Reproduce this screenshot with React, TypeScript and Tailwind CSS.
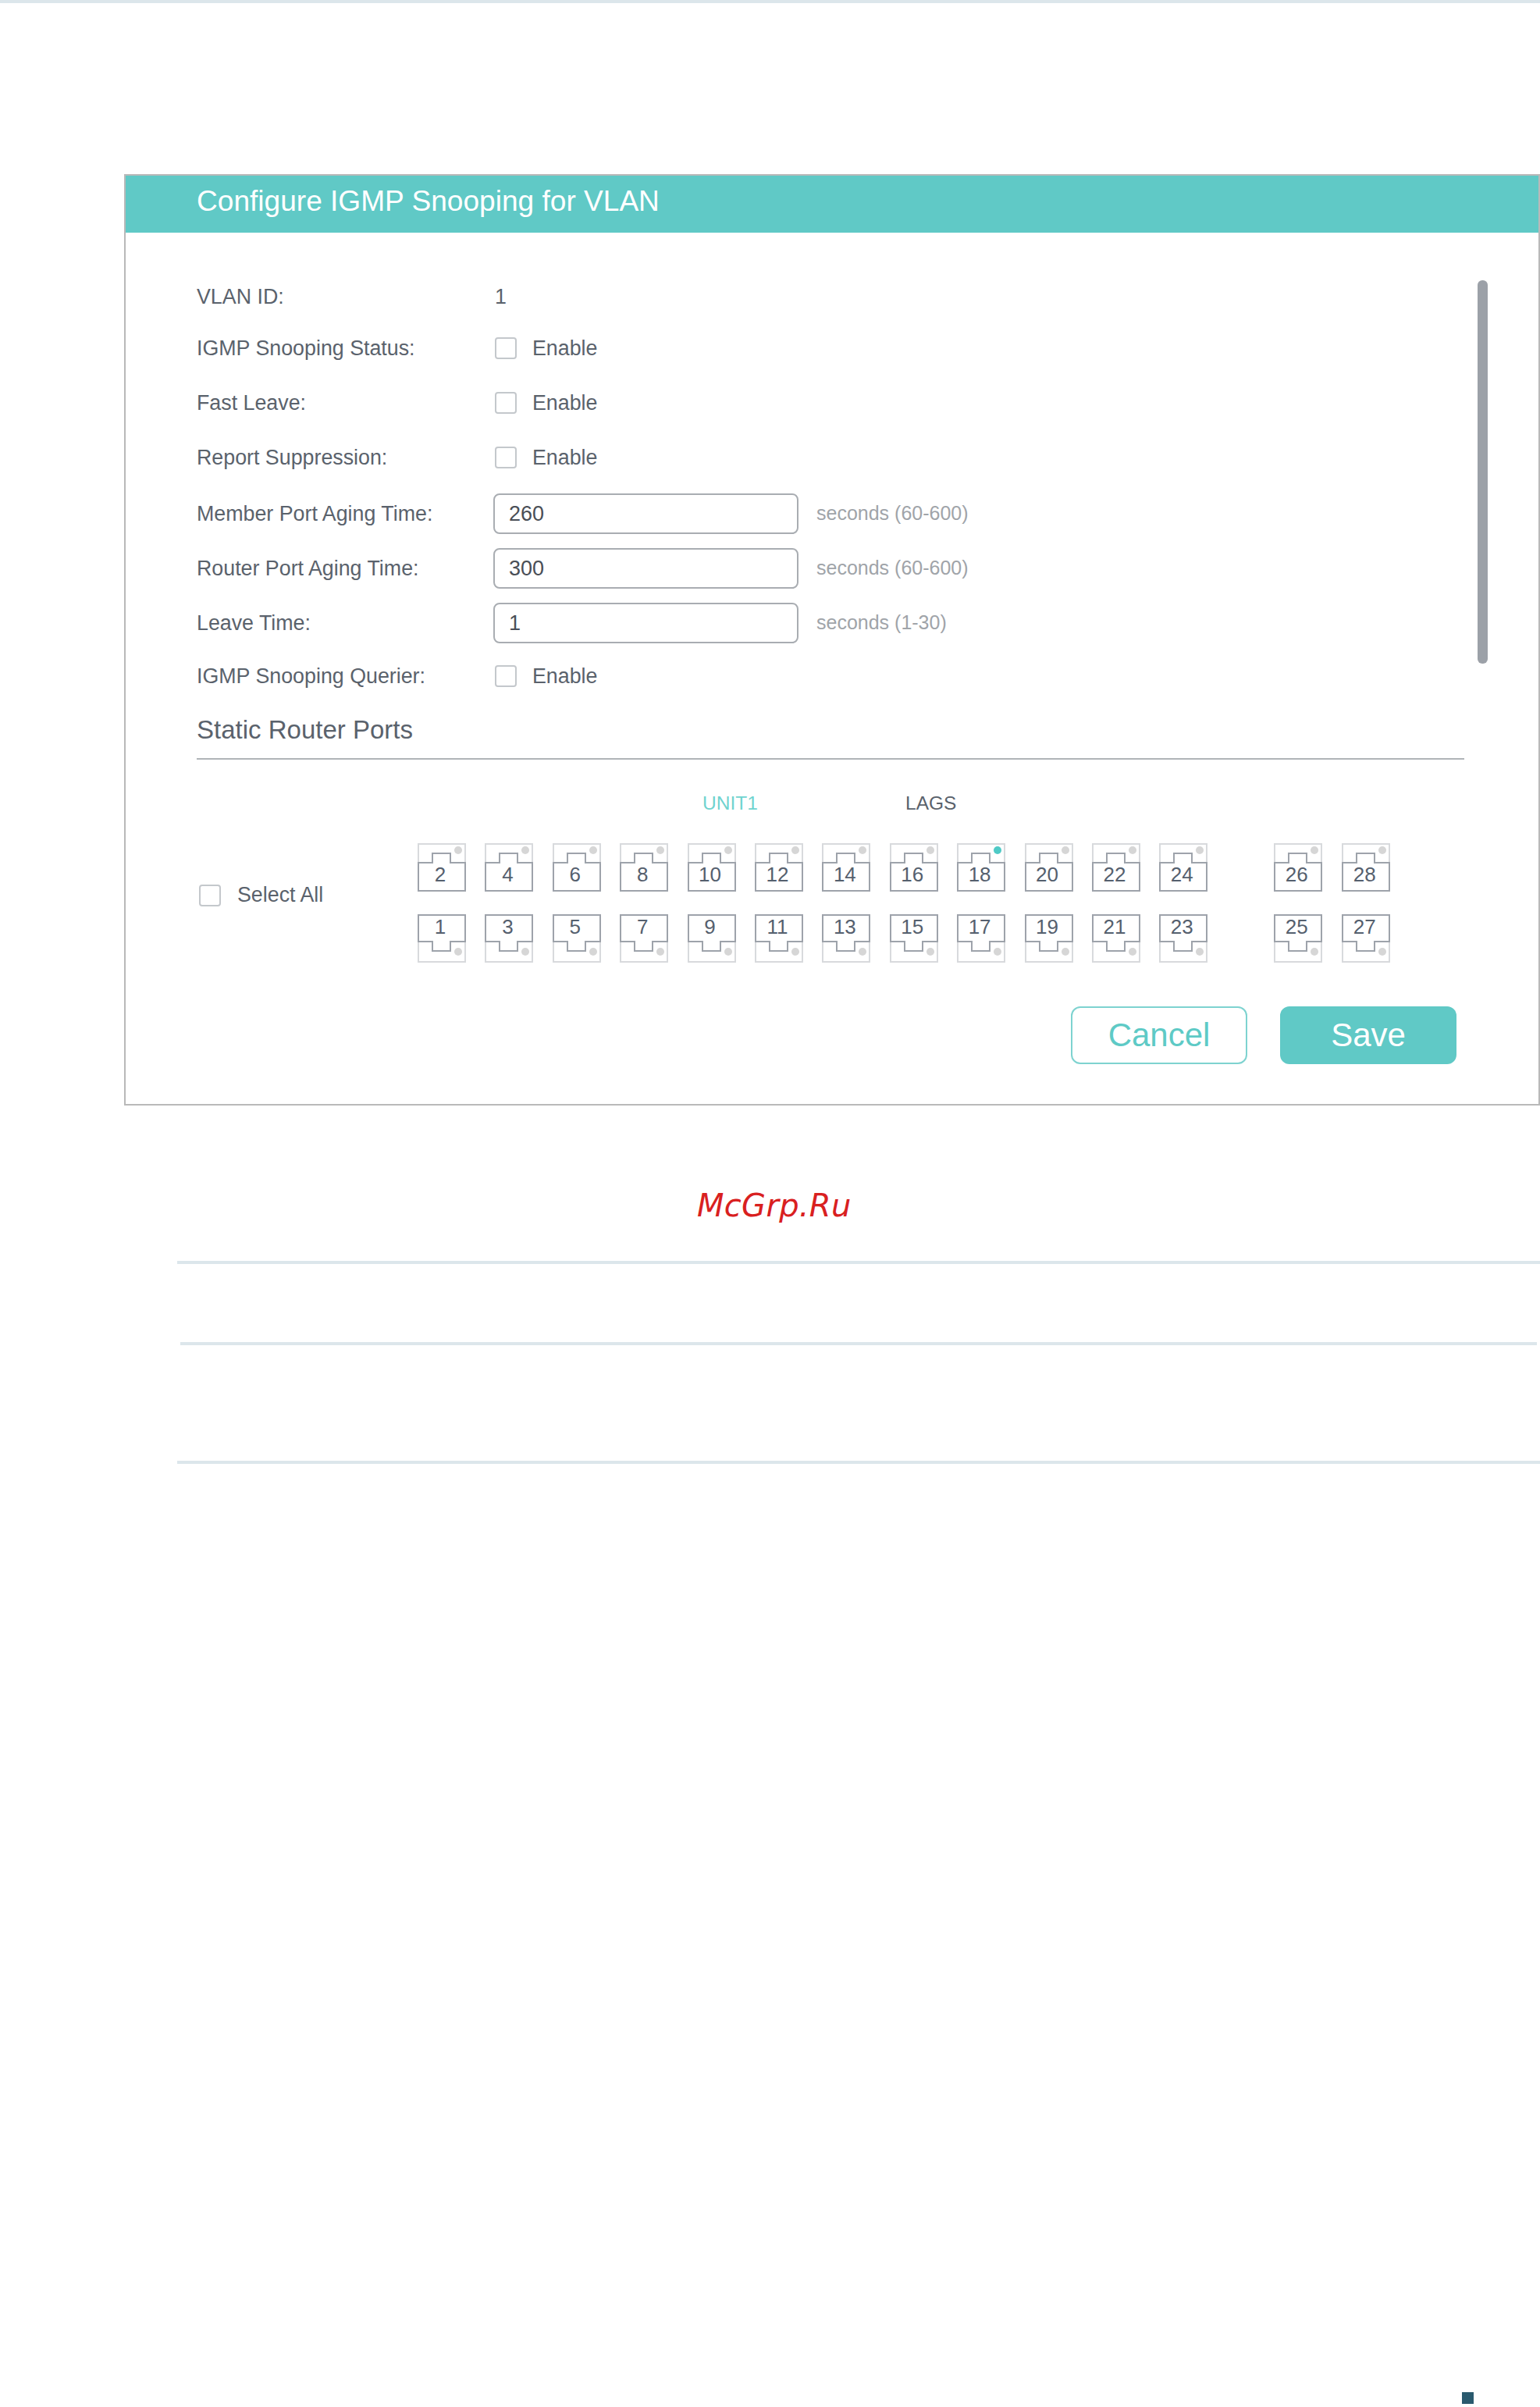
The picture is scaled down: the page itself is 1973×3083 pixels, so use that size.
const SANS = "font-['Liberation_Sans',Arial,sans-serif]";

const topRow = [2, 4, 6, 8, 10, 12, 14, 16, 18, 20, 22, 24];
const bottomRow = [1, 3, 5, 7, 9, 11, 13, 15, 17, 19, 21, 23];
const lagsTop = [26, 28];
const lagsBottom = [25, 27];

function Port({ n, flip, active }: { n: number; flip?: boolean; active?: boolean }) {
  const dot = active ? '#4fcac6' : '#d6d6d6';
  return (
    <div className="relative w-[62px] h-[62px]">
      <svg width="62" height="62" viewBox="0 0 62 62" fill="none" className="block">
        <rect x="1" y="1" width="60" height="60" stroke="#d8dadd" strokeWidth="2" />
        {flip ? (
          <>
            <path d="M1 35V1H61V35H42V47H19V35Z" stroke="#9ea3ab" strokeWidth="2" />
            <circle cx="52" cy="48" r="5" fill={dot} />
          </>
        ) : (
          <>
            <path d="M1 25V61H61V25H42V13H19V25Z" stroke="#9ea3ab" strokeWidth="2" />
            <circle cx="52" cy="9" r="5" fill={dot} />
          </>
        )}
      </svg>
      <span
        className={`absolute left-0 w-[58px] text-center text-[26px] leading-[30px] text-[#55606e] ${flip ? 'top-[1px]' : 'top-[25px]'}`}
      >
        {n}
      </span>
    </div>
  );
}

function Check() {
  return <span className="block w-[28px] h-[28px] rounded-[4px] border-2 border-[#c4c8cc] bg-white shrink-0" />;
}

function Row({ label, children, h = 'h-[70px]' }: { label: string; children: React.ReactNode; h?: string }) {
  return (
    <div className={`flex items-center ${h}`}>
      <div className="w-[380px] text-[26.8px] text-[#5a626c]">{label}</div>
      {children}
    </div>
  );
}

function EnableRow({ label, h }: { label: string; h?: string }) {
  return (
    <Row label={label} h={h}>
      <div className="ml-[2px] flex items-center gap-[20px]">
        <Check />
        <span className="text-[26.8px] text-[#5a626c]">Enable</span>
      </div>
    </Row>
  );
}

function InputRow({ label, value, hint }: { label: string; value: string; hint: string }) {
  return (
    <Row label={label}>
      <div className="w-[391px] h-[52px] rounded-[8px] border-2 border-[#a9adb2] flex items-center pl-[18px] text-[27px] text-[#4a4f57]">
        {value}
      </div>
      <span className="ml-[23px] text-[25px] text-[#a0a4a9]">{hint}</span>
    </Row>
  );
}

export default function App() {
  return (
    <div className={`w-[1973px] h-[3083px] bg-white overflow-hidden flex flex-col ${SANS}`}>
      <div className="h-[4px] bg-[#dce6eb]" />

      <div className="ml-[159px] mt-[219px] h-[1193px] border-2 border-[#b9b9b9] flex flex-col">
        <div className="h-[73px] bg-[#60c9c6] shrink-0 pl-[91px] text-[37.1px] leading-[64px] text-white">
          Configure IGMP Snooping for VLAN
        </div>

        <div className="relative flex-1 pl-[91px] pr-[95px] pt-[49px]">
          {/* scrollbar thumb */}
          <div className="absolute left-[1732px] top-[61px] w-[13px] h-[491px] rounded-[6px] bg-[#9ca1a8]" />

          <Row label="VLAN ID:" h="h-[64px] pt-[2px]">
            <span className="pl-[2px] text-[26.8px] text-[#5a626c]">1</span>
          </Row>
          <EnableRow label="IGMP Snooping Status:" />
          <EnableRow label="Fast Leave:" />
          <EnableRow label="Report Suppression:" />
          <div className="mt-[2px]">
            <InputRow label="Member Port Aging Time:" value="260" hint="seconds (60-600)" />
            <InputRow label="Router Port Aging Time:" value="300" hint="seconds (60-600)" />
            <InputRow label="Leave Time:" value="1" hint="seconds (1-30)" />
          </div>
          <EnableRow label="IGMP Snooping Querier:" h="h-[66px]" />

          <div className="h-[74px] border-b-2 border-[#b0b4b8] text-[33px] leading-[71px] text-[#5a626c]">
            Static Router Ports
          </div>

          <div className="mt-[36px] ml-[648px] h-[40px] flex text-[24.5px] leading-[40px]">
            <span className="w-[260px] text-[#6fd3cf]">UNIT1</span>
            <span className="text-[#5a626c]">LAGS</span>
          </div>

          <div className="mt-[31px] flex items-center">
            <div className="w-[283px] pl-[3px] mb-[20px] flex items-center gap-[21px]">
              <Check />
              <span className="text-[26.8px] text-[#5a626c]">Select All</span>
            </div>
            <div className="flex gap-[85px]">
              <div className="flex flex-col gap-[29px]">
                <div className="flex gap-[24.4px]">
                  {topRow.map((n) => (
                    <Port key={n} n={n} active={n === 18} />
                  ))}
                </div>
                <div className="flex gap-[24.4px]">
                  {bottomRow.map((n) => (
                    <Port key={n} n={n} flip />
                  ))}
                </div>
              </div>
              <div className="flex flex-col gap-[29px]">
                <div className="flex gap-[25px]">
                  {lagsTop.map((n) => (
                    <Port key={n} n={n} />
                  ))}
                </div>
                <div className="flex gap-[25px]">
                  {lagsBottom.map((n) => (
                    <Port key={n} n={n} flip />
                  ))}
                </div>
              </div>
            </div>
          </div>

          <div className="mt-[56px] flex justify-end gap-[42px] pr-[10px]">
            <button className="w-[226px] h-[74px] rounded-[12px] border-2 border-[#7ed3d0] bg-white pb-[2px] text-[42px] text-[#5ecac6]">
              Cancel
            </button>
            <button className="w-[226px] h-[74px] rounded-[12px] bg-[#60c9c6] pb-[2px] text-[42px] text-white">Save</button>
          </div>
        </div>
      </div>

      <div className="mt-[104px] pl-[893px] font-['DejaVu_Sans',sans-serif] italic text-[40px] leading-[48px] tracking-[0.3px] text-[#d9201f]">
        McGrp.Ru
      </div>

      <div className="mt-[47px] ml-[227px] h-[4px] bg-[#dce6eb]" />
      <div className="mt-[100px] ml-[231px] mr-[4px] h-[4px] bg-[#dce6eb]" />
      <div className="mt-[148px] ml-[227px] h-[4px] bg-[#dce6eb]" />

      <div className="mt-auto mb-[4px] ml-[1873px] w-[15px] h-[15px] bg-[#2a5a6e]" />
    </div>
  );
}
